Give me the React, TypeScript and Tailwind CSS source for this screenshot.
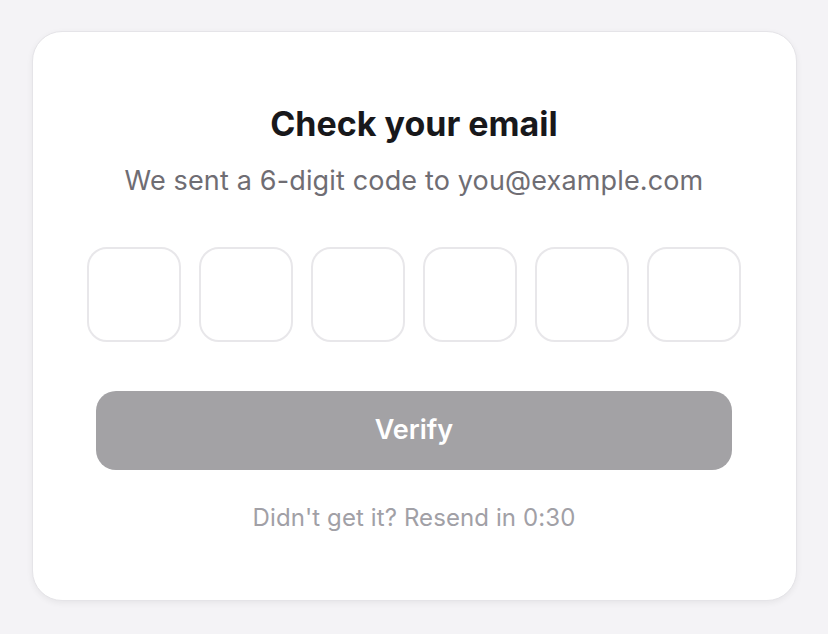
export default function App() {
  const digits = [0, 1, 2, 3, 4, 5];

  return (
    <div
      className="flex min-h-[634px] w-full items-start justify-center bg-[#f4f3f6] pt-[31px]"
      style={{ fontFamily: 'Inter, "Noto Sans", sans-serif' }}
    >
      <div className="flex w-[765px] flex-col items-center rounded-[30px] border border-[#e5e4e8] bg-white pt-[72px] pb-[67px] shadow-[0_2px_6px_rgba(0,0,0,0.06)]">
        <h1 className="text-[34px] font-bold leading-[40px] text-[#18181b]">
          Check your email
        </h1>
        <p className="mt-[21px] text-[27px] leading-[32px] tracking-[0.15px] text-[#6f6d73]">
          We sent a 6-digit code to you@example.com
        </p>

        <div className="mt-[50px] flex gap-[18px]">
          {digits.map((d) => (
            <input
              key={d}
              type="text"
              inputMode="numeric"
              maxLength={1}
              aria-label={`Digit ${d + 1}`}
              className="h-[95px] w-[94px] rounded-[20px] border-2 border-[#e8e7ea] bg-white text-center text-[32px] text-[#18181b] outline-none"
            />
          ))}
        </div>

        <button
          disabled
          className="mt-[49px] h-[79px] w-[636px] rounded-[20px] bg-[#a3a2a5] text-[27px] font-semibold text-white"
        >
          Verify
        </button>

        <p className="mt-[33px] text-[24px] leading-[30px] tracking-[0.1px] text-[#a1a0a6]">
          Didn't get it? Resend in 0:30
        </p>
      </div>
    </div>
  );
}
